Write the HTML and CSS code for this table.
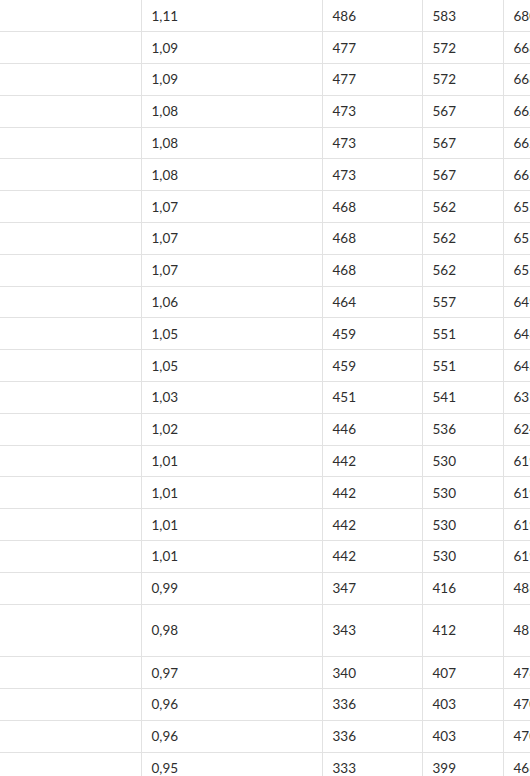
FILE: index.html
```html
<!DOCTYPE html>
<html lang="ru">
<head>
<meta charset="utf-8">
<title>Таблица</title>
<link rel="stylesheet" href="styles.css">
</head>
<body>
<table class="grid">
  <colgroup>
    <col class="c-name"><col class="c-k"><col class="c-a"><col class="c-b"><col class="c-c">
  </colgroup>
  <tbody>
    <tr><td></td><td>1,11</td><td>486</td><td>583</td><td>680</td></tr>
    <tr><td></td><td>1,09</td><td>477</td><td>572</td><td>668</td></tr>
    <tr><td></td><td>1,09</td><td>477</td><td>572</td><td>668</td></tr>
    <tr><td></td><td>1,08</td><td>473</td><td>567</td><td>662</td></tr>
    <tr><td></td><td>1,08</td><td>473</td><td>567</td><td>662</td></tr>
    <tr><td></td><td>1,08</td><td>473</td><td>567</td><td>662</td></tr>
    <tr><td></td><td>1,07</td><td>468</td><td>562</td><td>655</td></tr>
    <tr><td></td><td>1,07</td><td>468</td><td>562</td><td>655</td></tr>
    <tr><td></td><td>1,07</td><td>468</td><td>562</td><td>655</td></tr>
    <tr><td></td><td>1,06</td><td>464</td><td>557</td><td>649</td></tr>
    <tr><td></td><td>1,05</td><td>459</td><td>551</td><td>643</td></tr>
    <tr><td></td><td>1,05</td><td>459</td><td>551</td><td>643</td></tr>
    <tr><td></td><td>1,03</td><td>451</td><td>541</td><td>631</td></tr>
    <tr><td></td><td>1,02</td><td>446</td><td>536</td><td>624</td></tr>
    <tr><td></td><td>1,01</td><td>442</td><td>530</td><td>619</td></tr>
    <tr><td></td><td>1,01</td><td>442</td><td>530</td><td>619</td></tr>
    <tr><td></td><td>1,01</td><td>442</td><td>530</td><td>619</td></tr>
    <tr><td></td><td>1,01</td><td>442</td><td>530</td><td>619</td></tr>
    <tr><td></td><td>0,99</td><td>347</td><td>416</td><td>486</td></tr>
    <tr class="tall"><td></td><td>0,98</td><td>343</td><td>412</td><td>481</td></tr>
    <tr><td></td><td>0,97</td><td>340</td><td>407</td><td>476</td></tr>
    <tr><td></td><td>0,96</td><td>336</td><td>403</td><td>470</td></tr>
    <tr><td></td><td>0,96</td><td>336</td><td>403</td><td>470</td></tr>
    <tr><td></td><td>0,95</td><td>333</td><td>399</td><td>466</td></tr>
  </tbody>
</table>
</body>
</html>
```

FILE: styles.css
```css
html, body {
  margin: 0;
  padding: 0;
  background: #ffffff;
  overflow: hidden;
}

.grid {
  border-collapse: collapse;
  table-layout: fixed;
  width: 603px;
  font-family: Lato, "Open Sans", sans-serif;
  font-size: 13.5px;
  color: #2e2e2e;
}

.c-name { width: 141px; }
.c-k { width: 181px; }
.c-a { width: 100px; }
.c-b { width: 81px; }
.c-c { width: 100px; }

.grid tr {
  height: 31.8px;
}

.grid tr.tall {
  height: 52.6px;
}

.grid td {
  padding: 0 10px;
  border-top: 1px solid #e2e2e2;
  border-left: 1px solid #e2e2e2;
  vertical-align: middle;
  white-space: nowrap;
  overflow: hidden;
}

.grid tr:first-child td {
  border-top: none;
}

.grid td:first-child {
  border-left: none;
}
```
